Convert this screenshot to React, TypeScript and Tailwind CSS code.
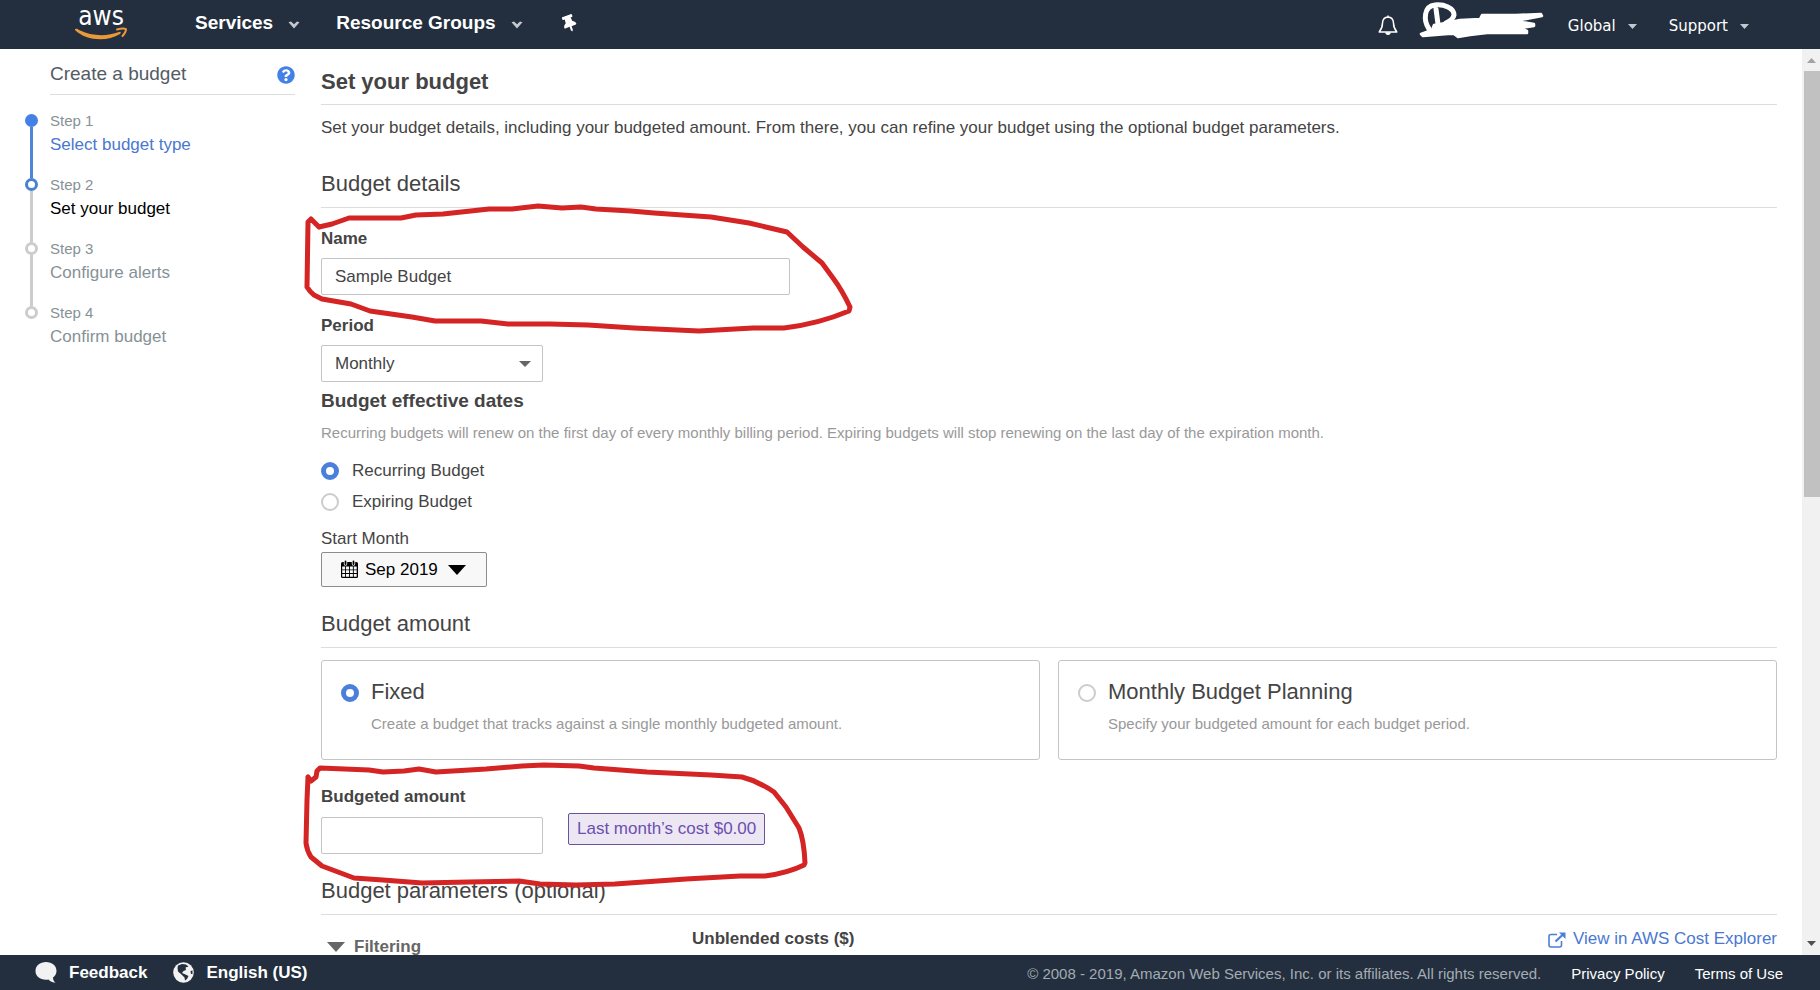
import React from 'react';
import { FaQuestionCircle, FaThumbtack } from 'react-icons/fa';

const nameMark =
  'M319 227 L311 219 L308 222 L307 287 Q310 292 314 295 L322 299 L351 304 L370 311 L412 317 L435 321 L481 321 L508 324 L550 324 L588 325 L634 328 L699 331 L753 328 L784 328 Q818 324 849 311 L850 307 Q842 290 833 278 L822 263 L803 247 L787 232 L749 223 L711 217 L654 213 L631 211 L596 209 L581 207 L562 208 L538 206 L512 209 L489 209 L443 214 L416 215 L401 218 L349 218 L332 224 L319 227';
const amountMark =
  'M308 777 L307 800 L306 843 Q307 851 311 857 L322 866 L354 878 L383 880 L422 883 L469 882 L519 881 L540 884 L576 885 L615 884 L686 879 L740 876 L765 876 Q788 873 804 865 L805 863 Q804 840 799 828 L786 807 L774 792 Q758 781 742 777 L711 775 L647 772 L594 768 L579 766 L544 765 L522 766 L486 769 L436 772 L419 769 L404 771 L383 772 L369 770 L320 768 L317 771 L316 777 L311 781 L308 777';

const steps = [
  { n: 1, label: 'Select budget type', dot: 'bg-[#4381e6] border-[#4381e6]', text: 'text-[#4a78cf]', line: 'bg-[#4f85d8]' },
  { n: 2, label: 'Set your budget', dot: 'bg-white border-[#4a80d4]', text: 'text-black', line: 'bg-[#cccccc]' },
  { n: 3, label: 'Configure alerts', dot: 'bg-white border-[#cccccc]', text: 'text-[#879196]', line: 'bg-[#cccccc]' },
  { n: 4, label: 'Confirm budget', dot: 'bg-white border-[#cccccc]', text: 'text-[#879196]', line: '' },
];

function Chevron() {
  return (
    <svg className="mt-1 h-2 w-3" viewBox="0 0 12 8" fill="#c3c8ce" aria-hidden="true">
      <path d="M0.5 1.2 L3 0.5 L6 3.2 L9 0.5 L11.5 1.2 L6 7.4 Z" />
    </svg>
  );
}

function Caret({ className }: { className: string }) {
  return (
    <svg className={className} viewBox="0 0 18 10" preserveAspectRatio="none" fill="currentColor" aria-hidden="true">
      <path d="M0 0 H18 L9 10 Z" />
    </svg>
  );
}

function AwsLogo() {
  return (
    <svg className="h-[49px] w-[54px]" viewBox="0 0 54 49" role="img" aria-label="aws">
      <text x="27" y="25" textAnchor="middle" fontFamily="DejaVu Sans Condensed, Roboto, sans-serif" fontSize="26" fill="#ffffff">aws</text>
      <path d="M1 29 Q3 28 5 30 C18 36.500 33 36.500 45 32 Q48 31 46 34 C33 42 12 41 1 30 Z" fill="#e9983a" />
      <path d="M43 29.500 Q50 27.500 52 29.200 Q52 32 48.500 36" fill="none" stroke="#e9983a" strokeWidth="2" strokeLinecap="round" />
    </svg>
  );
}

function Scribble() {
  return (
    <svg className="h-[49px] w-[126px]" viewBox="0 0 126 49" strokeLinecap="round" strokeLinejoin="round" aria-hidden="true">
      <path d="M11 29 C5 20 6 6 17 5 C26 4 36 8 36 15 Q35 20 28 23 M18 9 L20 24" fill="none" stroke="#ffffff" strokeWidth="5" />
      <path
        d="M3 34 L14 30 L16 25 L22 24 L32 22 L42 20 L62 19 L64 15 L98 15 L123 14 L124 16 L98 21 L116 24 L116 26 L102 28 L109 31 L109 33 L69 33 L52 35 L40 37 L36 34 L30 34 L5 36 Z"
        fill="#ffffff"
        stroke="#ffffff"
        strokeWidth="2.500"
      />
    </svg>
  );
}

function CalendarIcon() {
  return (
    <svg className="mb-[2px] h-[18px] w-[17px]" viewBox="0 0 17 18" aria-hidden="true">
      <rect x="0" y="2" width="17" height="16" rx="1.5" fill="#000" />
      <path
        fill="#f8f8f8"
        d="M1.2 6.500h2.9v2.9h-2.9z M5 6.500h3v2.9h-3z M8.900 6.500h3v2.9h-3z M12.800 6.500h2.9v2.9h-2.9z M1.2 10.200h2.9v2.9h-2.9z M5 10.200h3v2.9h-3z M8.900 10.200h3v2.9h-3z M12.800 10.200h2.9v2.9h-2.9z M1.2 13.900h2.9v2.9h-2.9z M5 13.900h3v2.9h-3z M8.900 13.900h3v2.9h-3z M12.800 13.900h2.9v2.9h-2.9z"
      />
      <path d="M4.500 1.500v2.500 M12.500 1.500v2.500" stroke="#f8f8f8" strokeWidth="3.400" strokeLinecap="round" />
      <path d="M4.500 1.500v2.500 M12.500 1.500v2.500" stroke="#000" strokeWidth="1.800" strokeLinecap="round" />
    </svg>
  );
}

function ExternalIcon() {
  return (
    <svg className="mt-[2px] h-4 w-[18px]" viewBox="0 0 18 16" fill="none" stroke="#4a80d8" strokeWidth="1.6" aria-hidden="true">
      <path d="M9 2.5 H3 Q1 2.5 1 4.5 V13 Q1 15 3 15 H11.500 Q13.500 15 13.500 13 V9" />
      <path d="M7.500 9.500 L15 2.500" strokeWidth="2.200" />
      <path d="M11 0.500 H17.500 V7 Z" fill="#4a80d8" stroke="none" />
    </svg>
  );
}

const radio =
  'size-[18px] shrink-0 appearance-none rounded-full border-2 border-[#cccccc] bg-white checked:border-[5px] checked:border-[#4a80dc]';
const sectionTitle = 'border-b border-[#dddddd] pb-[9px] text-[22px] leading-7';
const fieldLabel = 'text-[17px] leading-6 font-bold';
const box = 'rounded-[2px] border border-[#c4c4c4] bg-white px-[13px] text-[17px]';

function Header() {
  return (
    <header className="flex h-[49px] shrink-0 items-center bg-[#232f3e] text-white">
      <a href="#home" className="ml-[74px]"><AwsLogo /></a>
      <nav className="flex items-center pb-[3px] text-[19px] font-bold">
        <button className="ml-[67px] flex items-center gap-[15px]">Services <Chevron /></button>
        <button className="ml-9 flex items-center gap-[15px]">Resource Groups <Chevron /></button>
        <button className="ml-[38px]" aria-label="Pin"><FaThumbtack className="size-[17px] -rotate-[20deg]" /></button>
      </nav>
      <div className="ml-auto flex items-center pr-[71px] font-['DejaVu_Sans',sans-serif] text-[15px]">
        <button aria-label="Notifications">
          <svg className="h-[22px] w-5" viewBox="0 0 20 22" fill="none" stroke="#ffffff" strokeWidth="1.500" strokeLinejoin="round">
            <path d="M10 1.500 V3 M10 3 Q15.200 3.300 15.500 9 Q15.500 14 18.800 18 H1.200 Q4.500 14 4.500 9 Q4.800 3.300 10 3 Z" />
            <path d="M8 19 Q10 21.500 12 19 Z" fill="#ffffff" />
          </svg>
        </button>
        <div className="ml-5"><Scribble /></div>
        <button className="ml-6 flex items-center gap-3 pt-[3px]">Global <Caret className="h-[5px] w-[9px] text-[#c3c8ce]" /></button>
        <button className="ml-8 flex items-center gap-3 pt-[3px]">Support <Caret className="h-[5px] w-[9px] text-[#c3c8ce]" /></button>
      </div>
    </header>
  );
}

function Sidebar() {
  return (
    <aside className="w-[295px] shrink-0 pl-6">
      <div className="ml-[26px] flex h-[46px] items-center justify-between border-b border-[#dddddd] pt-[6px] text-[#545b64]">
        <h2 className="text-[19px]">Create a budget</h2>
        <a href="#help" aria-label="Help"><FaQuestionCircle className="size-[18px] text-[#4381e6]" /></a>
      </div>
      <ol className="pt-4">
        {steps.map((s) => (
          <li key={s.n} className="flex h-16 gap-3">
            <div className="flex w-[14px] flex-col items-center pt-[3px]">
              <span className={`size-[13px] shrink-0 rounded-full border-[3px] ${s.dot}`} />
              <span className={`-mb-[3px] w-[3px] grow ${s.line}`} />
            </div>
            <div>
              <div className="text-[15px] leading-5 text-[#879196]">Step {s.n}</div>
              <a href={`#step-${s.n}`} className={`block text-[17px] leading-7 ${s.text}`}>{s.label}</a>
            </div>
          </li>
        ))}
      </ol>
    </aside>
  );
}

function BudgetForm() {
  return (
    <main className="min-w-0 grow pr-[25px] pl-[26px]">
      <h1 className="border-b border-[#dddddd] pt-[19px] pb-2 text-[22px] leading-7 font-bold">Set your budget</h1>
      <p className="pt-[11px] text-[17px] leading-6">
        Set your budget details, including your budgeted amount. From there, you can refine your budget using the optional budget parameters.
      </p>

      <h2 className={`mt-[30px] ${sectionTitle}`}>Budget details</h2>
      <div className="flex flex-col items-start">
        <label htmlFor="name" className={`mt-[19px] ${fieldLabel}`}>Name</label>
        <input id="name" defaultValue="Sample Budget" className={`mt-[7px] h-[37px] w-full max-w-[469px] ${box}`} />
        <label htmlFor="period" className={`mt-[19px] ${fieldLabel}`}>Period</label>
        <div className="relative mt-[7px]">
          <select id="period" className={`block h-[37px] w-[222px] appearance-none ${box}`}>
            <option>Monthly</option>
          </select>
          <Caret className="pointer-events-none absolute top-4 right-3 h-[6px] w-3 text-[#666666]" />
        </div>
      </div>

      <h3 className="mt-[7px] text-[19px] leading-6 font-bold">Budget effective dates</h3>
      <p className="mt-2 text-[15px] leading-6 text-[#999999]">
        Recurring budgets will renew on the first day of every monthly billing period. Expiring budgets will stop renewing on the last day of the expiration month.
      </p>
      <div className="mt-[10px] flex flex-col items-start text-[17px]">
        <label className="flex h-[31px] items-center gap-[13px]">
          <input type="radio" name="recurrence" defaultChecked className={radio} />Recurring Budget
        </label>
        <label className="flex h-[31px] items-center gap-[13px]">
          <input type="radio" name="recurrence" className={radio} />Expiring Budget
        </label>
        <span className="mt-[10px] leading-6">Start Month</span>
        <button className="mt-[1px] flex h-[35px] w-[166px] items-center gap-[7px] rounded-[2px] border border-[#8c8c8c] bg-[#f8f8f8] pl-[19px] text-black">
          <CalendarIcon />Sep 2019<Caret className="ml-[3px] h-[10px] w-[18px]" />
        </button>
      </div>

      <h2 className={`mt-[23px] ${sectionTitle}`}>Budget amount</h2>
      <div className="mt-3 grid grid-cols-2 gap-[18px]">
        {[
          { title: 'Fixed', text: 'Create a budget that tracks against a single monthly budgeted amount.', on: true },
          { title: 'Monthly Budget Planning', text: 'Specify your budgeted amount for each budget period.', on: false },
        ].map((c) => (
          <label key={c.title} className="flex h-[100px] gap-3 rounded-[3px] border border-[#c4c4c4] pt-[17px] pl-[19px]">
            <input type="radio" name="amount-type" defaultChecked={c.on} className={`mt-[6px] ${radio}`} />
            <span>
              <span className="block text-[22px] leading-7">{c.title}</span>
              <span className="mt-[6px] block text-[15px] leading-6 text-[#999999]">{c.text}</span>
            </span>
          </label>
        ))}
      </div>

      <div className="mt-[25px] flex flex-col items-start">
        <label htmlFor="amount" className={fieldLabel}>Budgeted amount</label>
        <div className="mt-1 flex gap-[25px]">
          <input id="amount" className={`mt-1 h-[37px] w-[222px] ${box}`} />
          <span className="flex h-8 items-center rounded-[2px] border border-[#69529e] bg-[#ede7f3] px-2 text-[17px] text-[#6b4fb0]">Last month’s cost $0.00</span>
        </div>
      </div>

      <h2 className={`mt-[23px] ${sectionTitle}`}>Budget parameters (optional)</h2>
      <div className="flex items-start pt-3">
        <button className="mt-2 flex w-[371px] items-center gap-[9px] pl-[6px] text-[17px] leading-6 font-bold text-[#666666]">
          <Caret className="h-[10px] w-[18px]" />Filtering
        </button>
        <h3 className={fieldLabel}>Unblended costs ($)</h3>
        <a href="#explorer" className="ml-auto flex items-center gap-[7px] text-[17px] leading-6 text-[#4a78cf]">
          <ExternalIcon />View in AWS Cost Explorer
        </a>
      </div>
    </main>
  );
}

function Scrollbar() {
  return (
    <div className="flex w-[18px] shrink-0 flex-col bg-[#f1f1f1]" aria-hidden="true">
      <div className="flex h-[22px] items-center justify-center"><Caret className="h-[5px] w-[9px] rotate-180 text-[#a3a3a3]" /></div>
      <div className="ml-0.5 h-[47%] bg-[#c1c1c1]" />
      <div className="mt-auto flex h-6 items-center justify-center"><Caret className="h-[5px] w-[9px] text-[#505050]" /></div>
    </div>
  );
}

function Footer() {
  return (
    <footer className="flex h-[35px] shrink-0 items-center bg-[#232f3e] pr-[37px] pl-[35px] text-white">
      <button className="flex items-center gap-3 text-[17px] font-bold">
        <svg className="h-[21px] w-[22px]" viewBox="0 0 22 21" fill="#f2f2f2" aria-hidden="true">
          <path d="M11 0 C17 0 21.500 3.600 21.500 9 C21.500 12 20 14 18 15.500 C18 18 19 19.500 20.500 20.800 C16.500 20.500 14.500 19 13.500 17.500 C6 18.500 0.500 15 0.500 9 C0.500 3.600 5 0 11 0 Z" />
        </svg>
        Feedback
      </button>
      <button className="ml-[26px] flex items-center gap-3 text-[17px] font-bold">
        <svg className="size-[21px]" viewBox="0 0 21 21" aria-hidden="true">
          <circle cx="10.500" cy="10.500" r="10.300" fill="#f2f2f2" />
          <path fill="#232f3e" d="M5 3.500 L9 2 L13 2.500 L15.500 4.500 L12.500 5.500 L13 8 L10.500 9 L9 11 L12.500 12.500 L15.500 14 L14 17 L12 18.500 L11.500 15.500 L8.500 12.500 L5 9.500 L4.500 6 Z M17.500 9 L19.500 8.500 L19.500 12 L18 12 Z" />
        </svg>
        English (US)
      </button>
      <div className="ml-auto flex gap-[30px] pt-[3px] text-[15px]">
        <span className="text-[#a4abb2]">© 2008 - 2019, Amazon Web Services, Inc. or its affiliates. All rights reserved.</span>
        <a href="#privacy">Privacy Policy</a>
        <a href="#terms">Terms of Use</a>
      </div>
    </footer>
  );
}

export default function App() {
  return (
    <div className="relative flex h-screen flex-col overflow-hidden bg-white font-['Liberation_Sans',Arial,sans-serif] text-[#444444]">
      <Header />
      <div className="flex min-h-0 grow">
        <div className="flex min-w-0 grow overflow-hidden">
          <Sidebar />
          <BudgetForm />
        </div>
        <Scrollbar />
      </div>
      <Footer />
      <svg className="pointer-events-none absolute top-0 left-0 h-[990px] w-[900px]" viewBox="0 0 900 990" fill="none" stroke="#d42424" strokeWidth="5" strokeLinejoin="round" strokeLinecap="round" aria-hidden="true">
        <path d={nameMark} />
        <path d={amountMark} />
      </svg>
    </div>
  );
}
